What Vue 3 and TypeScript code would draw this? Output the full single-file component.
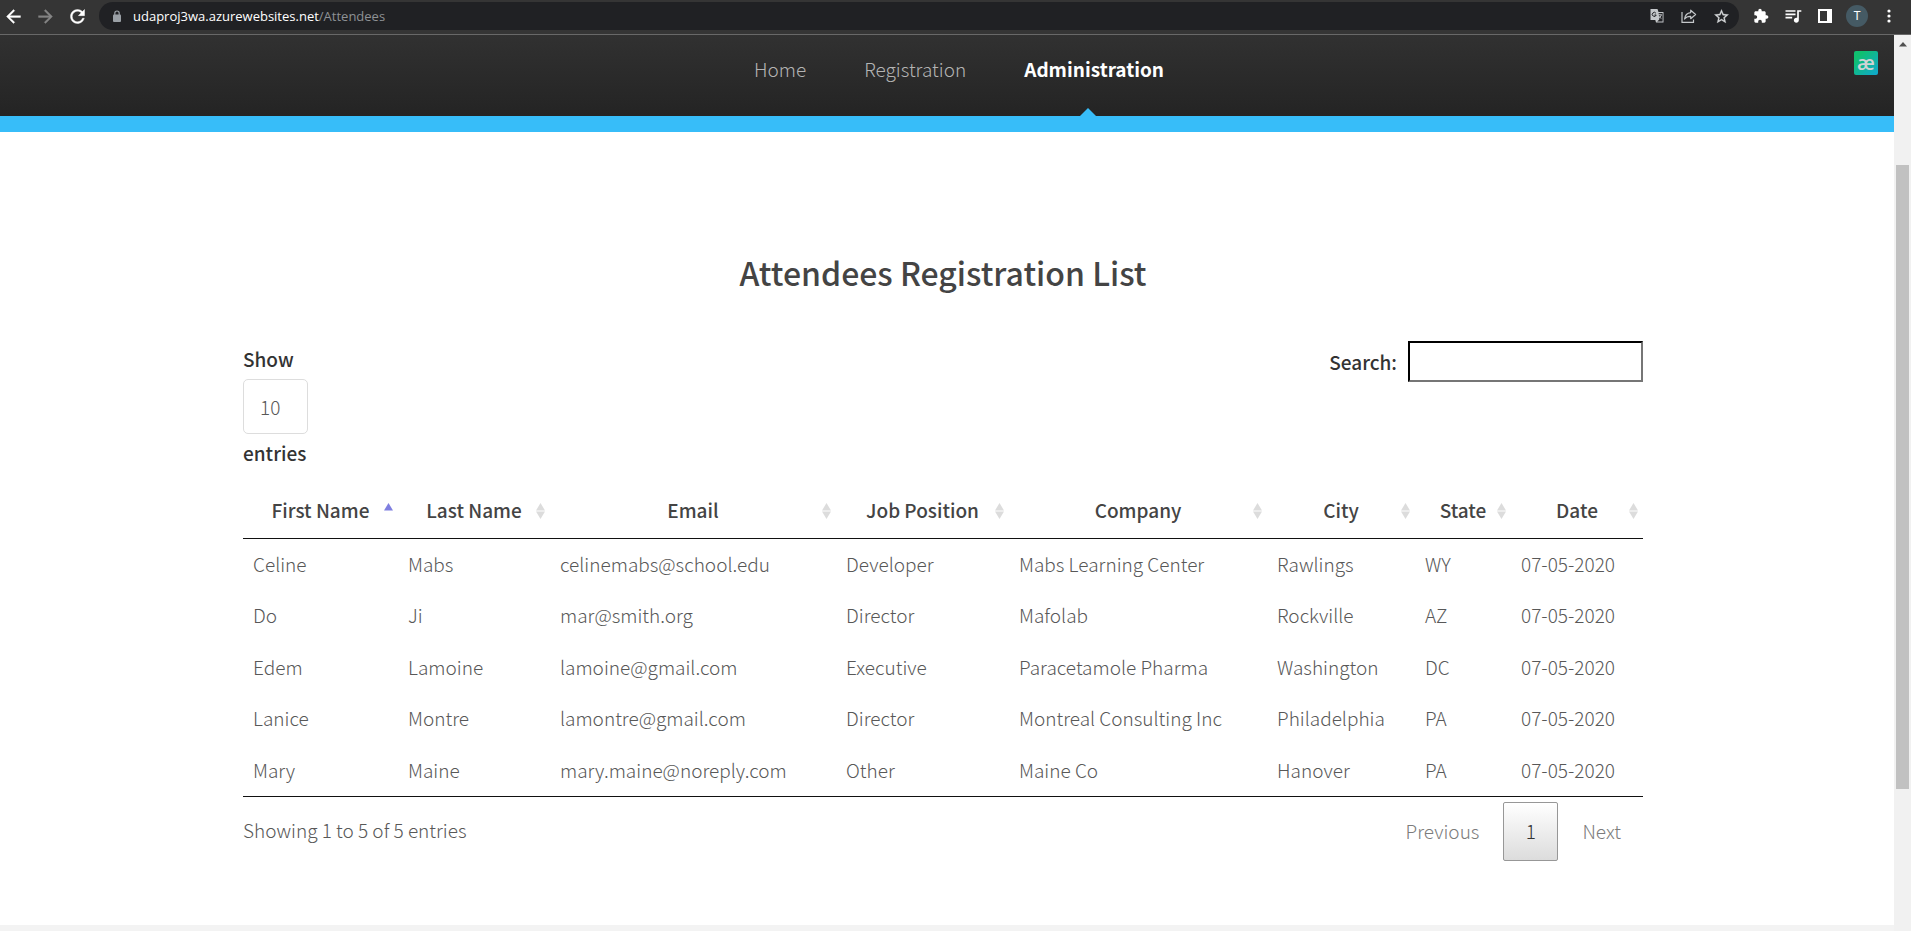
<script setup lang="ts">
import { computed, ref } from 'vue'

interface Attendee {
  first: string
  last: string
  email: string
  job: string
  company: string
  city: string
  state: string
  date: string
}

interface Column {
  key: keyof Attendee
  label: string
}

const columns: Column[] = [
  { key: 'first', label: 'First Name' },
  { key: 'last', label: 'Last Name' },
  { key: 'email', label: 'Email' },
  { key: 'job', label: 'Job Position' },
  { key: 'company', label: 'Company' },
  { key: 'city', label: 'City' },
  { key: 'state', label: 'State' },
  { key: 'date', label: 'Date' },
]

const attendees: Attendee[] = [
  { first: 'Celine', last: 'Mabs', email: 'celinemabs@school.edu', job: 'Developer', company: 'Mabs Learning Center', city: 'Rawlings', state: 'WY', date: '07-05-2020' },
  { first: 'Do', last: 'Ji', email: 'mar@smith.org', job: 'Director', company: 'Mafolab', city: 'Rockville', state: 'AZ', date: '07-05-2020' },
  { first: 'Edem', last: 'Lamoine', email: 'lamoine@gmail.com', job: 'Executive', company: 'Paracetamole Pharma', city: 'Washington', state: 'DC', date: '07-05-2020' },
  { first: 'Lanice', last: 'Montre', email: 'lamontre@gmail.com', job: 'Director', company: 'Montreal Consulting Inc', city: 'Philadelphia', state: 'PA', date: '07-05-2020' },
  { first: 'Mary', last: 'Maine', email: 'mary.maine@noreply.com', job: 'Other', company: 'Maine Co', city: 'Hanover', state: 'PA', date: '07-05-2020' },
]

const query = ref('')
const pageSize = ref('10')
const sortKey = ref<keyof Attendee>('first')
const descending = ref(false)

const rows = computed(() => {
  const needle = query.value.trim().toLowerCase()
  const found = attendees.filter((a) => Object.values(a).some((v) => v.toLowerCase().includes(needle)))
  found.sort((a, b) => a[sortKey.value].localeCompare(b[sortKey.value]))
  return descending.value ? found.reverse() : found
})

function sortBy(key: keyof Attendee) {
  descending.value = sortKey.value === key ? !descending.value : false
  sortKey.value = key
}
</script>

<template>
  <div class="window">
    <div class="toolbar">
      <button class="tool first" type="button" aria-label="Back">
        <svg width="21" height="21" viewBox="0 0 24 24"><path fill="#fff" stroke="#fff" stroke-width=".4" d="M20 11H7.83l5.59-5.59L12 4l-8 8 8 8 1.41-1.41L7.83 13H20z" /></svg>
      </button>
      <button class="tool" type="button" aria-label="Forward">
        <svg width="21" height="21" viewBox="0 0 24 24"><path fill="#858585" stroke="#858585" stroke-width=".4" d="M4 11h12.17l-5.59-5.59L12 4l8 8-8 8-1.41-1.41L16.17 13H4z" /></svg>
      </button>
      <button class="tool" type="button" aria-label="Reload">
        <svg width="21" height="21" viewBox="0 0 24 24"><path fill="#fff" stroke="#fff" stroke-width=".5" d="M17.65 6.35C16.2 4.9 14.21 4 12 4c-4.42 0-7.99 3.58-7.99 8s3.57 8 7.99 8c3.73 0 6.84-2.55 7.73-6h-2.08c-.82 2.33-3.04 4-5.65 4-3.31 0-6-2.69-6-6s2.69-6 6-6c1.66 0 3.14.69 4.22 1.78L13 11h7V4z" /></svg>
      </button>
      <div class="omnibox">
        <svg class="lock" width="10" height="13" viewBox="0 0 10 13"><path d="M2.8 5V3.2a2.2 2.2 0 0 1 4.4 0V5" fill="none" stroke="#9aa0a6" stroke-width="1.2" /><rect x="1" y="4.5" width="8" height="7.5" rx="1" fill="#9aa0a6" /></svg>
        <span class="url">udaproj3wa.azurewebsites.net<span class="path">/Attendees</span></span>
        <button class="tool" type="button" aria-label="Translate">
          <svg width="16" height="16" viewBox="0 0 16 16"><path d="M1.5 1h7l1 3h5v10.500H7l-.7-2.500H1.500z" fill="#c4c7ca" /><path d="M9.600 5h4v8.600H8.200l2.100-2z" fill="#202124" /><path d="M6.900 5.200A2 2 0 1 0 7.200 7H5.400" fill="none" stroke="#202124" stroke-width="1" /><path d="M8.800 6.800h4.200M10.900 5.800v1M12.300 7c-.4 1.600-1.500 2.700-2.700 3.400M9.700 7.800c.6 1.200 1.500 2 2.700 2.700" fill="none" stroke="#c4c7ca" stroke-width=".9" /></svg>
        </button>
        <button class="tool" type="button" aria-label="Share">
          <svg width="16" height="16" viewBox="0 0 16 16" fill="none" stroke="#c4c7ca" stroke-width="1.200"><path d="M1 4v10.400h11.500v-3" /><path d="M9.700 2.200 14.600 6.500 9.700 10.700V8.300C6.800 8.200 5 9 3.600 11 4 7.500 6 5 9.700 4.600z" stroke-linejoin="round" /></svg>
        </button>
        <button class="tool" type="button" aria-label="Bookmark">
          <svg width="17" height="17" viewBox="0 0 24 24"><path fill="#d5d7d9" stroke="#d5d7d9" stroke-width=".4" d="M22 9.240l-7.190-.62L12 2 9.190 8.630 2 9.240l5.460 4.730L5.820 21 12 17.270 18.180 21l-1.630-7.030zM12 15.400l-3.760 2.270 1-4.280-3.320-2.880 4.380-.38L12 6.100l1.710 4.040 4.380.38-3.320 2.880 1 4.280z" /></svg>
        </button>
      </div>
      <button class="tool" type="button" aria-label="Extensions">
        <svg width="16" height="16" viewBox="0 0 24 24"><path fill="#fff" d="M20.500 11H19V7c0-1.100-.9-2-2-2h-4V3.500C13 2.120 11.880 1 10.500 1S8 2.120 8 3.500V5H4c-1.100 0-1.990.9-1.990 2v3.800H3.500c1.490 0 2.700 1.210 2.700 2.700s-1.210 2.700-2.700 2.700H2V20c0 1.100.9 2 2 2h3.800v-1.500c0-1.490 1.210-2.700 2.700-2.700s2.700 1.210 2.700 2.700V22H17c1.100 0 2-.9 2-2v-4h1.500c1.380 0 2.500-1.120 2.500-2.500S21.880 11 20.500 11z" /></svg>
      </button>
      <button class="tool" type="button" aria-label="Media controls">
        <svg width="20" height="20" viewBox="0 0 24 24"><path fill="#fff" d="M15 5H3v2h12zm0 4H3v2h12zM3 15h8v-2H3zM17 5v9.180c-.31-.11-.65-.18-1-.18-1.660 0-3 1.340-3 3s1.340 3 3 3 3-1.340 3-3V7h3V5z" /></svg>
      </button>
      <button class="tool" type="button" aria-label="Side panel">
        <svg width="14" height="14" viewBox="0 0 14 14"><path fill="#fff" fill-rule="evenodd" d="M0 0h14v14H0zM2 2v10h7V2z" /></svg>
      </button>
      <button class="tool" type="button" aria-label="Profile"><span class="avatar">T</span></button>
      <button class="tool" type="button" aria-label="Menu">
        <svg width="4" height="14" viewBox="0 0 4 14" fill="#fff"><circle cx="2" cy="2" r="1.600" /><circle cx="2" cy="7" r="1.600" /><circle cx="2" cy="12" r="1.600" /></svg>
      </button>
    </div>

    <div class="viewport">
      <div class="page">
        <header class="site-header">
          <nav class="nav">
            <a href="#">Home</a>
            <a href="#">Registration</a>
            <a href="#" class="current" aria-current="page">Administration</a>
          </nav>
          <button class="badge" type="button">æ</button>
        </header>

        <main class="main">
          <div class="container">
            <h2>Attendees Registration List</h2>

            <div class="controls">
              <label class="length">
                <span>Show</span>
                <select v-model="pageSize">
                  <option>10</option>
                  <option>25</option>
                  <option>50</option>
                  <option>100</option>
                </select>
                <span>entries</span>
              </label>
              <label class="search">Search:<input v-model="query" type="search" /></label>
            </div>

            <table>
              <colgroup>
                <col v-for="c in columns" :key="c.key" :class="'col-' + c.key" />
              </colgroup>
              <thead>
                <tr>
                  <th v-for="c in columns" :key="c.key" scope="col">
                    <button class="sort" type="button" @click="sortBy(c.key)">
                      <span class="label">{{ c.label }}</span>
                      <svg width="9" height="16" viewBox="0 0 9 16">
                        <path v-if="sortKey !== c.key || !descending" d="M4.500 0 9 7.500H0z" :fill="sortKey === c.key ? '#7f7fe0' : '#dcdcdc'" />
                        <path v-if="sortKey !== c.key || descending" d="M0 8.500h9L4.500 16z" :fill="sortKey === c.key ? '#7f7fe0' : '#dcdcdc'" />
                      </svg>
                    </button>
                  </th>
                </tr>
              </thead>
              <tbody>
                <tr v-for="row in rows" :key="row.email">
                  <td v-for="c in columns" :key="c.key">{{ row[c.key] }}</td>
                </tr>
              </tbody>
            </table>

            <div class="table-footer">
              <p>Showing 1 to 5 of 5 entries</p>
              <div class="pager">
                <button type="button" class="step">Previous</button>
                <button type="button" class="active">1</button>
                <button type="button" class="step">Next</button>
              </div>
            </div>
          </div>
        </main>
      </div>

      <div class="scrollbar">
        <svg width="8" height="5" viewBox="0 0 8 5"><path d="M4 0 8 4.500H0z" fill="#505050" /></svg>
        <div class="thumb"></div>
      </div>
    </div>
  </div>
</template>

<style>
body {
  margin: 0;
}
</style>

<style scoped>
* {
  box-sizing: border-box;
}

.window {
  display: flex;
  flex-direction: column;
  min-height: 100vh;
  font-family: "Noto Sans CJK SC", "Open Sans", sans-serif;
  font-weight: 300;
  font-size: 19px;
  line-height: 31px;
  color: #585858;
}

button,
input,
select {
  font: inherit;
  color: inherit;
  margin: 0;
}

button {
  padding: 0;
  border: 0;
  background: none;
  cursor: pointer;
}

.toolbar {
  display: flex;
  align-items: center;
  height: 35px;
  padding: 0 6px 2px 0;
  background: #353535;
  border-bottom: 1px solid #686868;
}

.tool {
  display: flex;
  flex: none;
  align-items: center;
  justify-content: center;
  width: 32px;
  height: 28px;
}

.tool.first {
  width: 26px;
  margin-right: 3px;
}

.omnibox {
  display: flex;
  flex: 1;
  align-items: center;
  height: 28px;
  margin: 0 6px;
  padding: 0 2px 0 13px;
  border-radius: 14px;
  background: #202124;
}

.url {
  flex: 1;
  margin-left: 11px;
  font: 400 13px/20px "Open Sans", sans-serif;
  color: #fff;
}

.path {
  color: #8e9195;
}

.avatar {
  width: 22px;
  height: 22px;
  border-radius: 50%;
  background: #455a64;
  font: 400 12px/22px Roboto, sans-serif;
  color: #fff;
}

.viewport {
  display: flex;
  flex: 1;
}

.page {
  flex: 1;
  background: #f3f3f3;
}

.site-header {
  position: relative;
  height: 97px;
  border-bottom: 16px solid #37bdf9;
  background: linear-gradient(#313131, #242424);
}

.nav {
  display: flex;
  justify-content: center;
  gap: 58px;
  height: 81px;
  padding: 18px 0 0 24px;
}

.nav a {
  position: relative;
  color: #b4b4b4;
  text-decoration: none;
}

.nav .current {
  font-weight: 700;
  color: #fff;
}

.nav .current::after {
  content: "";
  position: absolute;
  bottom: 0;
  left: 50%;
  margin-left: -14px;
  border: 8px solid transparent;
  border-top: 0;
  border-bottom-color: #37bdf9;
}

.badge {
  position: absolute;
  top: 16px;
  right: 16px;
  width: 24px;
  height: 24px;
  border-radius: 2px;
  background: linear-gradient(135deg, #10c070 20%, #10a8d0);
  font: 600 20px/18px "Open Sans", sans-serif;
  color: #d0d4d4;
}

.main {
  padding: 118px 8px 64px 0;
  background: #fff;
}

.container {
  max-width: 1400px;
  margin: 0 auto;
}

h2 {
  margin: 0;
  font-size: 32px;
  font-weight: 500;
  line-height: 44px;
  text-align: center;
  color: #444;
}

.controls {
  display: flex;
  justify-content: space-between;
  align-items: flex-start;
  margin-top: 47px;
  font-weight: 500;
  color: #333;
}

.length {
  display: flex;
  flex-direction: column;
  align-items: flex-start;
  padding-top: 2px;
}

.length select {
  width: 65px;
  height: 55px;
  margin: 5px 0 3px;
  padding: 0 16px;
  border: 1px solid #ddd;
  border-radius: 5px;
  background: #fff;
  font-weight: 300;
  color: #585858;
  appearance: none;
}

.search {
  display: flex;
  align-items: center;
  gap: 11px;
}

.search input {
  width: 235px;
  height: 41px;
  border: 2px inset #767676;
  border-color: #202124 #767676 #767676 #202124;
  border-radius: 0;
  background: #fff;
  appearance: none;
}

table {
  width: 100%;
  margin-top: 15px;
  table-layout: fixed;
  border-collapse: separate;
  border-spacing: 0;
  border-bottom: 1px solid #111;
}

.col-first { width: 155px; }
.col-last { width: 152px; }
.col-email { width: 286px; }
.col-job { width: 173px; }
.col-company { width: 258px; }
.col-city { width: 148px; }
.col-state { width: 96px; }
.col-date { width: 132px; }

th {
  padding: 0;
  border-bottom: 1px solid #111;
  font-weight: 500;
  color: #444;
}

.sort {
  display: grid;
  grid-template-columns: 20px 1fr 20px;
  align-items: center;
  justify-items: center;
  width: 100%;
  height: 55px;
}

.label {
  grid-column: 2;
  padding-bottom: 2px;
  white-space: nowrap;
}

td {
  height: 51px;
  padding: 0 10px 3px;
  white-space: nowrap;
}

tr:nth-child(even) td {
  height: 52px;
}

.table-footer {
  display: flex;
  justify-content: space-between;
  align-items: center;
  padding-top: 5px;
}

.table-footer p {
  margin: 0;
  padding-bottom: 4px;
}

.pager {
  display: flex;
  gap: 2px;
}

.pager button {
  height: 59px;
  padding: 0 22px 2px;
}

.pager .active {
  width: 55px;
  padding: 0 0 2px;
  border: 1px solid #979797;
  border-radius: 2px;
  background: linear-gradient(#fff, #dcdcdc);
  color: #333;
}

.pager .step {
  color: #7c7c7c;
}

.scrollbar {
  display: flex;
  flex-direction: column;
  align-items: center;
  width: 17px;
  padding-top: 7px;
  background: #f1f1f1;
}

.thumb {
  flex: none;
  width: 13px;
  height: 67vh;
  margin-top: 118px;
  background: #c1c1c1;
}
</style>
